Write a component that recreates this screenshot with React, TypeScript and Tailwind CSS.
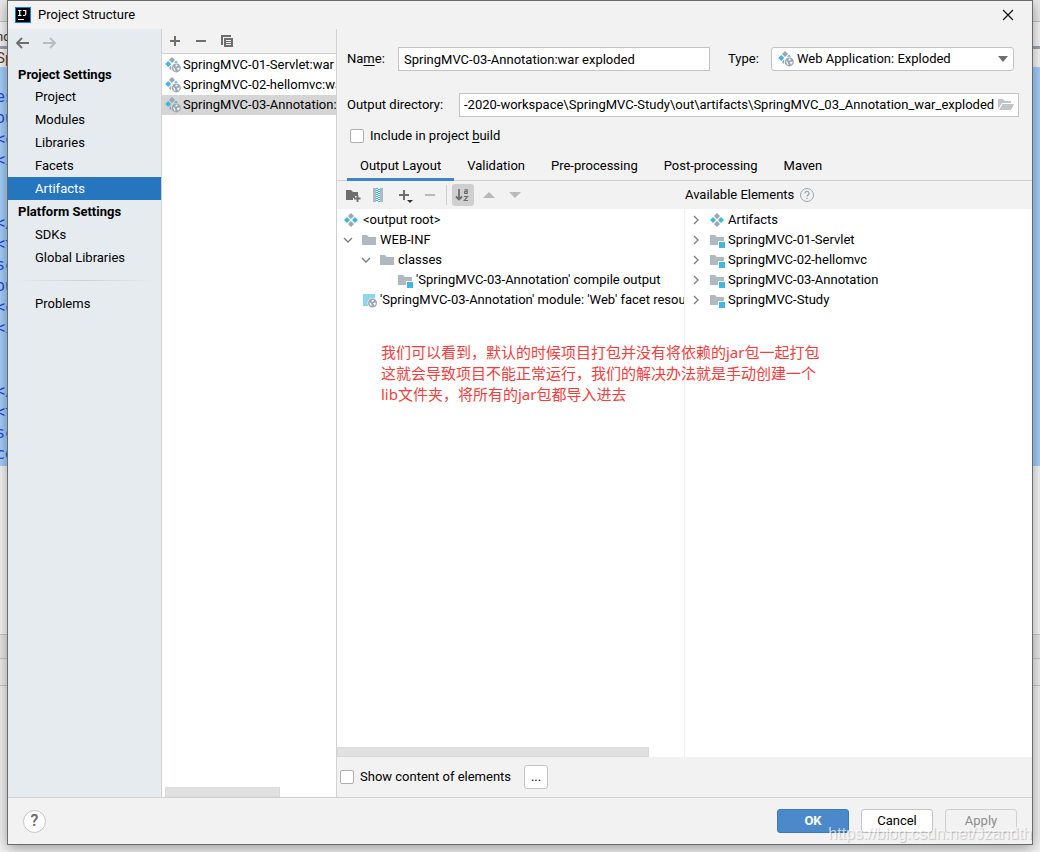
import React from "react";

const ui = "font-['Roboto','Noto_Sans_CJK_SC',sans-serif]";

function Diamonds() {
  return (
    <svg width="14" height="14" viewBox="0 0 14 14" className="shrink-0" aria-hidden="true">
      <path d="M7 0l3 3-3 3-3-3zM7 8l3 3-3 3-3-3z" fill="#9aa7b0" />
      <path d="M3 4l3 3-3 3-3-3zM11 4l3 3-3 3-3-3z" fill="#40b6e0" />
    </svg>
  );
}

function Globe({ x, y }: { x: number; y: number }) {
  return (
    <g transform={`translate(${x} ${y})`}>
      <circle cx="4.5" cy="4.5" r="4.5" fill="#9aa7b0" />
      <path d="M1.2 3.2l2 2 .6 2.6-1.6-1zM4 1.2l2.2.3-1 1.4-1.6.5zM5.2 4.6l2.4-.6.2 1.4-1.6 2z" fill="#fff" />
    </g>
  );
}

function WebArtifact() {
  return (
    <svg width="16" height="16" viewBox="0 0 16 16" className="shrink-0" aria-hidden="true">
      <path d="M7 0l3 3-3 3-3-3z" fill="#9aa7b0" />
      <path d="M3.200 4l3 3-3 3-3-3z" fill="#40b6e0" />
      <path d="M11 3.800l2 2H9z" fill="#40b6e0" />
      <path d="M6.200 8.400v5L4 11z" fill="#9aa7b0" />
      <Globe x={6.8} y={6.4} />
    </svg>
  );
}

function Folder({ badge }: { badge?: boolean }) {
  return (
    <svg width="16" height="16" viewBox="0 0 16 16" className="shrink-0" aria-hidden="true">
      <path d="M1 3h5l1.800 2H15v8H1z" fill="#aeb9c0" />
      {badge && <path d="M9 9h7v7H9z" fill="#f8fafb" />}
      {badge && <path d="M10 10h6v6h-6z" fill="#40b6e0" />}
    </svg>
  );
}

function Resources() {
  return (
    <svg width="16" height="16" viewBox="0 0 16 16" className="shrink-0" aria-hidden="true">
      <path d="M2 2h12v12H2z" fill="#8fd3ee" />
      <circle cx="11.5" cy="11" r="5" fill="#fff" />
      <Globe x={7} y={6.5} />
    </svg>
  );
}

function Chevron({ open }: { open?: boolean }) {
  return (
    <svg width="12" height="12" viewBox="0 0 12 12" className="shrink-0" fill="none" stroke="#7f7f7f" strokeWidth="1.4" aria-hidden="true">
      {open ? <path d="M2 4l4 4 4-4" /> : <path d="M4 2l4 4-4 4" />}
    </svg>
  );
}

const codeLines = ["es", "ou", "<c", "<i", "", "", "</", "<t", "sc", "ou", "<c", "<i", "", "", "</", "<t", "sc", "ce"];

function EditorBackdrop() {
  return (
    <div aria-hidden="true" className="absolute inset-0 flex flex-col overflow-hidden bg-[#f5f5f5] text-[15px] leading-[21px]">
      <div className="h-[22px] shrink-0 border-b border-[#c8c8c8] bg-[#ececec]" />
      <div className="h-[24px] shrink-0 bg-[#f8f8f8] pt-1 text-[13px] text-[#333]">
        <span className="-ml-1">nc</span>
      </div>
      <div className="h-[3px] shrink-0 bg-[#9aa5b5]" />
      <div className="h-[18px] shrink-0 bg-[#fafafa] leading-[18px] text-[#703c3c]">
        <span className="-ml-1">Sp</span>
      </div>
      <div className="h-[399px] shrink-0 bg-[#a6d2ff] pt-5 font-['DejaVu_Sans_Mono',monospace] text-[#1f4bd8]">
        {codeLines.map((line, i) => (
          <div key={i} className="-ml-1 h-[21px]">{line}</div>
        ))}
      </div>
      <div className="h-[168px] shrink-0 bg-[#fafafa]" />
      <div className="h-[25px] shrink-0 border-y border-[#c9c9c9] bg-[#ececec]" />
      <div className="h-[27px] shrink-0 border-b border-[#c9c9c9] bg-[#f2f2f2]" />
    </div>
  );
}

function NavItem({ label, active }: { label: string; active?: boolean }) {
  return (
    <li>
      <a
        href="#"
        className={active ? "block h-[23px] bg-[#2675bf] pl-[27px] leading-[23px] text-white" : "block h-[23px] pl-[27px] leading-[23px]"}
      >
        {label}
      </a>
    </li>
  );
}

function SettingsNav() {
  return (
    <nav className="flex w-[154px] shrink-0 flex-col border-r border-[#d1d1d1] bg-[#e6ebef]">
      <div className="flex h-[34px] items-start gap-3 pt-[7px] pl-[7px]">
        <button type="button" aria-label="Back">
          <svg width="15" height="14" viewBox="0 0 15 14" fill="none" stroke="#6e6e6e" strokeWidth="1.8">
            <path d="M14 7H2M7 2L2 7l5 5" />
          </svg>
        </button>
        <button type="button" aria-label="Forward" disabled>
          <svg width="15" height="14" viewBox="0 0 15 14" fill="none" stroke="#b8bcbf" strokeWidth="1.8">
            <path d="M1 7h12M8 2l5 5-5 5" />
          </svg>
        </button>
      </div>
      <h2 className="h-[22px] pl-[10px] leading-[23px] font-bold">Project Settings</h2>
      <ul>
        <NavItem label="Project" />
        <NavItem label="Modules" />
        <NavItem label="Libraries" />
        <NavItem label="Facets" />
        <NavItem label="Artifacts" active />
      </ul>
      <h2 className="h-[23px] pl-[10px] leading-6 font-bold">Platform Settings</h2>
      <ul>
        <NavItem label="SDKs" />
        <NavItem label="Global Libraries" />
      </ul>
      <div className="mx-2 my-[11px] h-px bg-linear-to-r from-transparent via-[#cdd1d4] to-transparent" />
      <ul>
        <NavItem label="Problems" />
      </ul>
    </nav>
  );
}

const artifacts = ["SpringMVC-01-Servlet:war exploded", "SpringMVC-02-hellomvc:war exploded", "SpringMVC-03-Annotation:war exploded"];

function ArtifactList() {
  return (
    <section className="flex w-[175px] shrink-0 flex-col border-r border-[#d1d1d1] bg-white">
      <div className="flex h-[25px] shrink-0 items-center gap-3 border-b border-[#d1d1d1] bg-[#f2f2f2] pl-[6px]">
        <button type="button" aria-label="Add">
          <svg width="14" height="14" viewBox="0 0 14 14" stroke="#6e6e6e" strokeWidth="2"><path d="M7 2v10M2 7h10" /></svg>
        </button>
        <button type="button" aria-label="Remove">
          <svg width="14" height="14" viewBox="0 0 14 14" stroke="#6e6e6e" strokeWidth="2"><path d="M2 7h10" /></svg>
        </button>
        <button type="button" aria-label="Copy">
          <svg width="14" height="14" viewBox="0 0 14 14">
            <path d="M1 1h10v2H3v8H1z" fill="#6e6e6e" />
            <path d="M4 4h9v9H4z" fill="#6e6e6e" />
            <path d="M6 6.5h5M6 8.5h5M6 10.5h5" stroke="#f2f2f2" />
          </svg>
        </button>
      </div>
      <ul className="min-h-0 flex-1 overflow-hidden pt-px">
        {artifacts.map((name, i) => (
          <li key={name} className={i === 2 ? "flex h-5 items-center gap-[2px] bg-[#d5d5d5] pl-[3px] whitespace-nowrap" : "flex h-5 items-center gap-[2px] pl-[3px] whitespace-nowrap"}>
            <WebArtifact />
            {name}
          </li>
        ))}
      </ul>
      <div className="ml-[3px] h-[10px] w-[115px] border border-[#d9d9d9] bg-[#e1e1e1]" />
    </section>
  );
}

function TreeRow({ children, indent }: { children: React.ReactNode; indent: string }) {
  return <li className={`flex h-5 items-center whitespace-nowrap ${indent}`}>{children}</li>;
}

const available = ["SpringMVC-01-Servlet", "SpringMVC-02-hellomvc", "SpringMVC-03-Annotation", "SpringMVC-Study"];
const tabs = ["Validation", "Pre-processing", "Post-processing", "Maven"];

function Editor() {
  return (
    <main className="flex min-w-0 flex-1 flex-col bg-[#f2f2f2]">
      <div className="mt-[18px] flex h-6 items-center pr-[18px] pl-[10px]">
        <label htmlFor="name" className="w-[51px] shrink-0">Na<u className="underline-offset-2">m</u>e:</label>
        <input id="name" defaultValue="SpringMVC-03-Annotation:war exploded" className="h-6 min-w-0 flex-1 border border-[#c4c4c4] bg-white px-[5px]" />
        <label htmlFor="type" className="ml-[18px] w-[43px] shrink-0">Type:</label>
        <div className="relative h-6 w-[243px] shrink-0">
          <select id="type" className="h-6 w-full appearance-none rounded-[3px] border border-[#c4c4c4] bg-white pl-[25px]">
            <option>Web Application: Exploded</option>
          </select>
          <span className="pointer-events-none absolute top-1 left-[7px]"><WebArtifact /></span>
          <svg width="10" height="6" viewBox="0 0 10 6" className="pointer-events-none absolute top-[9px] right-[6px]"><path d="M0 0h10L5 6z" fill="#6e6e6e" /></svg>
        </div>
      </div>
      <div className="mt-[22px] flex h-6 items-center pr-[13px] pl-[10px]">
        <label htmlFor="dir" className="w-[112px] shrink-0">Output directory:</label>
        <div className="flex h-6 min-w-0 flex-1 items-center gap-[2px] border border-[#c4c4c4] bg-white pr-1 pl-1">
          <input id="dir" defaultValue="-2020-workspace\SpringMVC-Study\out\artifacts\SpringMVC_03_Annotation_war_exploded" className="min-w-0 flex-1 bg-transparent" />
          <button type="button" aria-label="Browse">
            <svg width="16" height="12" viewBox="0 0 16 12"><path d="M0 0h5l2 2h6v2H4L0 10z" fill="#c0c5c9" /><path d="M4.500 5H16l-3 6H1z" fill="#c0c5c9" /></svg>
          </button>
        </div>
      </div>
      <label className="mt-[9px] flex h-5 items-center gap-[6px] pl-[13px]">
        <input type="checkbox" className="size-[14px] appearance-none rounded-[2px] border border-[#b0b0b0] bg-white" />
        <span>Include in project <u className="underline-offset-2">b</u>uild</span>
      </label>
      <div role="tablist" className="mt-2 flex h-[27px] shrink-0 border-b border-[#d1d1d1] pl-[10px]">
        <button type="button" role="tab" aria-selected="true" className="h-[27px] border-b-[3px] border-[#4083c9] px-[13px]">Output Layout</button>
        {tabs.map((tab) => (
          <button key={tab} type="button" role="tab" aria-selected="false" className="h-[27px] border-b-[3px] border-transparent px-[13px]">{tab}</button>
        ))}
      </div>
      <div className="flex h-7 shrink-0 items-center">
        <div className="flex w-[348px] shrink-0 items-center pl-2">
          <button type="button" aria-label="New folder">
            <svg width="16" height="16" viewBox="0 0 16 16"><path d="M1 3h5l2 2h5v4h-3v2H8v2H1z" fill="#6e6e6e" /><path d="M12.500 8v7M9 11.500h6.500" stroke="#6e6e6e" strokeWidth="1.800" /></svg>
          </button>
          <button type="button" aria-label="New archive" className="ml-[9px]">
            <svg width="16" height="16" viewBox="0 0 16 16">
              <path d="M3 1h3v14H3zM10 1h3v14h-3z" fill="#aeb9c0" />
              <path d="M6 1h4v14H6z" fill="#e4f3f9" />
              <path d="M7 1v14M9 2v13" stroke="#40b6e0" strokeDasharray="1 1" strokeWidth="2" />
            </svg>
          </button>
          <button type="button" aria-label="Add copy of" className="ml-3">
            <svg width="16" height="16" viewBox="0 0 16 16"><path d="M6 3v10M1 8h10" stroke="#6e6e6e" strokeWidth="2" /><path d="M9 13h6l-3 3z" fill="#333" /></svg>
          </button>
          <button type="button" aria-label="Remove" disabled className="ml-2">
            <svg width="16" height="16" viewBox="0 0 16 16"><path d="M3 8h10" stroke="#b9b9b9" strokeWidth="2" /></svg>
          </button>
          <span className="mr-[5px] ml-2 h-5 w-px bg-[#cfcfcf]" />
          <button type="button" aria-label="Sort" className="flex size-[22px] items-center justify-center rounded-[3px] bg-[#cfcfcf]">
            <svg width="16" height="16" viewBox="0 0 16 16" fill="none" stroke="#6e6e6e">
              <path d="M4 2v10M1 9.500l3 3 3-3" strokeWidth="1.800" />
              <path d="M9.500 2.800h2.700v4M12.200 4.700H9.700v1.800h2.500M9 9.500h3.500L9.300 13.500H13" strokeWidth="1.200" />
            </svg>
          </button>
          <button type="button" aria-label="Move up" disabled className="ml-[9px]">
            <svg width="12" height="6" viewBox="0 0 12 6"><path d="M0 6h12L6 0z" fill="#b9b9b9" /></svg>
          </button>
          <button type="button" aria-label="Move down" disabled className="ml-[14px]">
            <svg width="12" height="6" viewBox="0 0 12 6"><path d="M0 0h12L6 6z" fill="#b9b9b9" /></svg>
          </button>
        </div>
        <span>Available Elements</span>
        <svg width="14" height="14" viewBox="0 0 14 14" className="ml-[6px]" fill="none" stroke="#9aa7b0">
          <circle cx="7" cy="7" r="6.500" />
          <path d="M5 5.500a2 2 0 1 1 3 1.600c-.7.400-1 .7-1 1.500M7 9.700v1.300" strokeWidth="1.300" />
        </svg>
      </div>
      <div className="relative flex min-h-0 flex-1 bg-white">
        <div className="flex w-[348px] shrink-0 flex-col overflow-hidden border-r border-[#f0f0f0]">
          <ul className="flex-1 pt-px">
            <TreeRow indent="gap-[5px] pl-[7px]"><Diamonds />&lt;output root&gt;</TreeRow>
            <TreeRow indent="gap-1 pl-[5px]"><Chevron open /><span className="ml-[3px] flex items-center gap-[3px]"><Folder />WEB-INF</span></TreeRow>
            <TreeRow indent="gap-1 pl-[23px]"><Chevron open /><span className="ml-[3px] flex items-center gap-[3px]"><Folder />classes</span></TreeRow>
            <TreeRow indent="gap-[3px] pl-[60px]"><Folder badge />'SpringMVC-03-Annotation' compile output</TreeRow>
            <TreeRow indent="gap-[3px] pl-6"><Resources />'SpringMVC-03-Annotation' module: 'Web' facet resources</TreeRow>
          </ul>
          <div className="h-[10px] w-[312px] border border-[#d9d9d9] bg-[#e1e1e1]" />
        </div>
        <ul className="flex-1 pt-px">
          <TreeRow indent="pl-[5px]"><Chevron /><span className="ml-[8px] flex items-center gap-1"><Diamonds />Artifacts</span></TreeRow>
          {available.map((name) => (
            <TreeRow key={name} indent="pl-[5px]"><Chevron /><span className="ml-[7px] flex items-center gap-[3px]"><Folder badge />{name}</span></TreeRow>
          ))}
        </ul>
        <p className="absolute top-[133px] left-11 font-['Noto_Sans','Noto_Sans_CJK_SC',sans-serif] text-[15px] leading-[21px] whitespace-nowrap text-[#f43d3d]">
          我们可以看到，默认的时候项目打包并没有将依赖的jar包一起打包<br />
          这就会导致项目不能正常运行，我们的解决办法就是手动创建一个<br />
          lib文件夹，将所有的jar包都导入进去
        </p>
      </div>
      <div className="flex h-10 shrink-0 items-center gap-[13px] pl-[3px]">
        <label className="flex items-center gap-[6px]">
          <input type="checkbox" className="size-[14px] appearance-none rounded-[2px] border border-[#b0b0b0] bg-white" />
          Show content of elements
        </label>
        <button type="button" className="size-6 rounded-[3px] border border-[#c4c4c4] bg-white">...</button>
      </div>
    </main>
  );
}

export default function App() {
  return (
    <div className={`relative flex h-screen flex-col overflow-hidden px-[7px] pb-[7px] text-[13px] text-black ${ui}`}>
      <EditorBackdrop />
      <div className="relative flex min-h-0 flex-1 flex-col border border-[#6b6b6b] bg-[#f2f2f2] shadow-[0_3px_14px_rgba(0,0,0,0.4)]">
        <header className="flex h-7 shrink-0 items-center pl-[7px]">
          <svg width="16" height="16" viewBox="0 0 16 16" aria-hidden="true">
            <path d="M0 0h16v16H0z" fill="#087cfa" /><path d="M1 1h14v14H1z" fill="#000" />
            <path d="M3 3.500h3.500M4.750 3.500v5M3 8.500h3.500M8 3.500h2.750v3.500q0 1.500-1.500 1.500H8M3 12.500h6" stroke="#fff" strokeWidth="1.200" fill="none" />
          </svg>
          <h1 className="ml-[7px]">Project Structure</h1>
          <button type="button" aria-label="Close" className="mr-[18px] ml-auto">
            <svg width="12" height="12" viewBox="0 0 12 12" stroke="#111" strokeWidth="1.200"><path d="M1 1l10 10M11 1L1 11" /></svg>
          </button>
        </header>
        <div className="flex min-h-0 flex-1">
          <SettingsNav />
          <ArtifactList />
          <Editor />
        </div>
        <footer className="flex h-[47px] shrink-0 items-center gap-3 border-t border-[#d1d1d1] pr-[15px] pl-[15px]">
          <button type="button" aria-label="Help" className="mr-auto flex size-[23px] items-center justify-center rounded-full border border-[#c4c4c4] bg-white text-[16px] font-semibold text-[#6e6e6e]">?</button>
          <button type="button" className="h-6 w-[72px] rounded-[3px] border border-[#3f78b5] bg-[#4b89ca] font-bold text-white">OK</button>
          <button type="button" className="h-6 w-[72px] rounded-[3px] border border-[#c4c4c4] bg-white">Cancel</button>
          <button type="button" disabled className="h-6 w-[72px] rounded-[3px] border border-[#cfcfcf] text-[#8c8c8c]">Apply</button>
        </footer>
      </div>
      <span className="absolute right-2 bottom-2 font-['Liberation_Sans',sans-serif] text-base leading-5 text-white/70 [text-shadow:1px_1px_1px_rgba(0,0,0,0.2)]">
        https://blog.csdn.net/Jzandth
      </span>
    </div>
  );
}
